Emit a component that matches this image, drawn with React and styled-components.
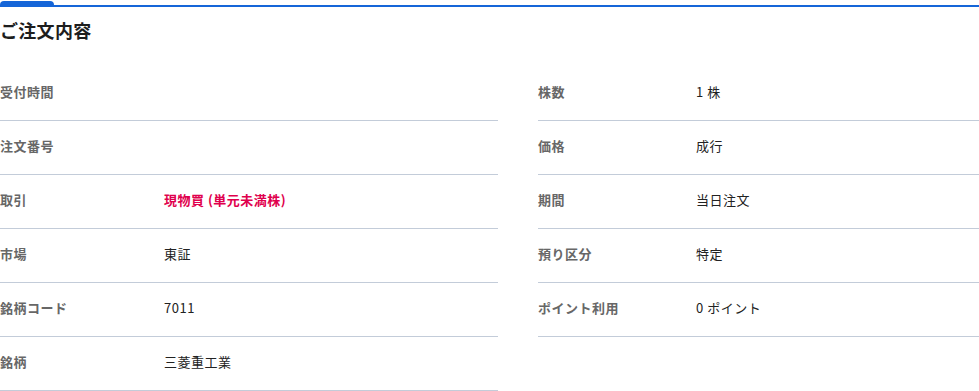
import React from 'react';
import styled, { createGlobalStyle } from 'styled-components';

const GlobalStyle = createGlobalStyle`
  html, body {
    margin: 0;
    padding: 0;
    background: #fff;
  }
  body {
    font-family: "Noto Sans CJK JP", "Noto Sans", sans-serif;
    color: #222;
    overflow: hidden;
  }
`;

const Page = styled.div`
  width: 979px;
  overflow: hidden;
`;

const TabBar = styled.div`
  position: relative;
  height: 7px;
  display: flex;
  align-items: flex-end;
`;

const TabLine = styled.div`
  flex: 1;
  height: 2px;
  background: #1565d8;
`;

const ActiveTab = styled.div`
  position: absolute;
  left: 0;
  top: 1px;
  width: 54px;
  height: 6px;
  background: #1565d8;
  border-radius: 4px 4px 0 0;
`;

const Title = styled.h2`
  margin: 10px 0 0;
  font-size: 18px;
  line-height: 26px;
  font-weight: 700;
  letter-spacing: 0.3px;
  color: #1d1d1d;
`;

const Columns = styled.div`
  display: grid;
  grid-template-columns: 498px 498px;
  column-gap: 40px;
  margin-top: 24px;
`;

const Column = styled.dl`
  margin: 0;
`;

const Row = styled.div`
  display: flex;
  align-items: center;
  box-sizing: border-box;
  height: 54px;
  padding-bottom: 4px;
  border-bottom: 1px solid #c3ccd9;
  font-size: 13px;
  letter-spacing: 0.5px;
`;

const Label = styled.dt`
  width: ${p => p.$width}px;
  flex-shrink: 0;
  font-weight: 700;
  color: #676767;
`;

const Value = styled.dd`
  margin: 0;
  color: ${p => (p.$accent ? '#e0004d' : '#222')};
  font-weight: ${p => (p.$accent ? 700 : 400)};
  white-space: pre;
`;

const leftRows = [
  ['受付時間', ''],
  ['注文番号', ''],
  ['取引', '現物買 (単元未満株)', true],
  ['市場', '東証'],
  ['銘柄コード', '7011'],
  ['銘柄', '三菱重工業'],
];

const rightRows = [
  ['株数', '1 株'],
  ['価格', '成行'],
  ['期間', '当日注文'],
  ['預り区分', '特定'],
  ['ポイント利用', '0 ポイント'],
];

const DetailColumn = ({ rows, labelWidth }) => (
  <Column>
    {rows.map(([label, value, accent]) => (
      <Row key={label}>
        <Label $width={labelWidth}>{label}</Label>
        <Value $accent={accent}>{value}</Value>
      </Row>
    ))}
  </Column>
);

export default function App() {
  return (
    <Page>
      <GlobalStyle />
      <TabBar>
        <ActiveTab />
        <TabLine />
      </TabBar>
      <Title>ご注文内容</Title>
      <Columns>
        <DetailColumn rows={leftRows} labelWidth={164} />
        <DetailColumn rows={rightRows} labelWidth={158} />
      </Columns>
    </Page>
  );
}
